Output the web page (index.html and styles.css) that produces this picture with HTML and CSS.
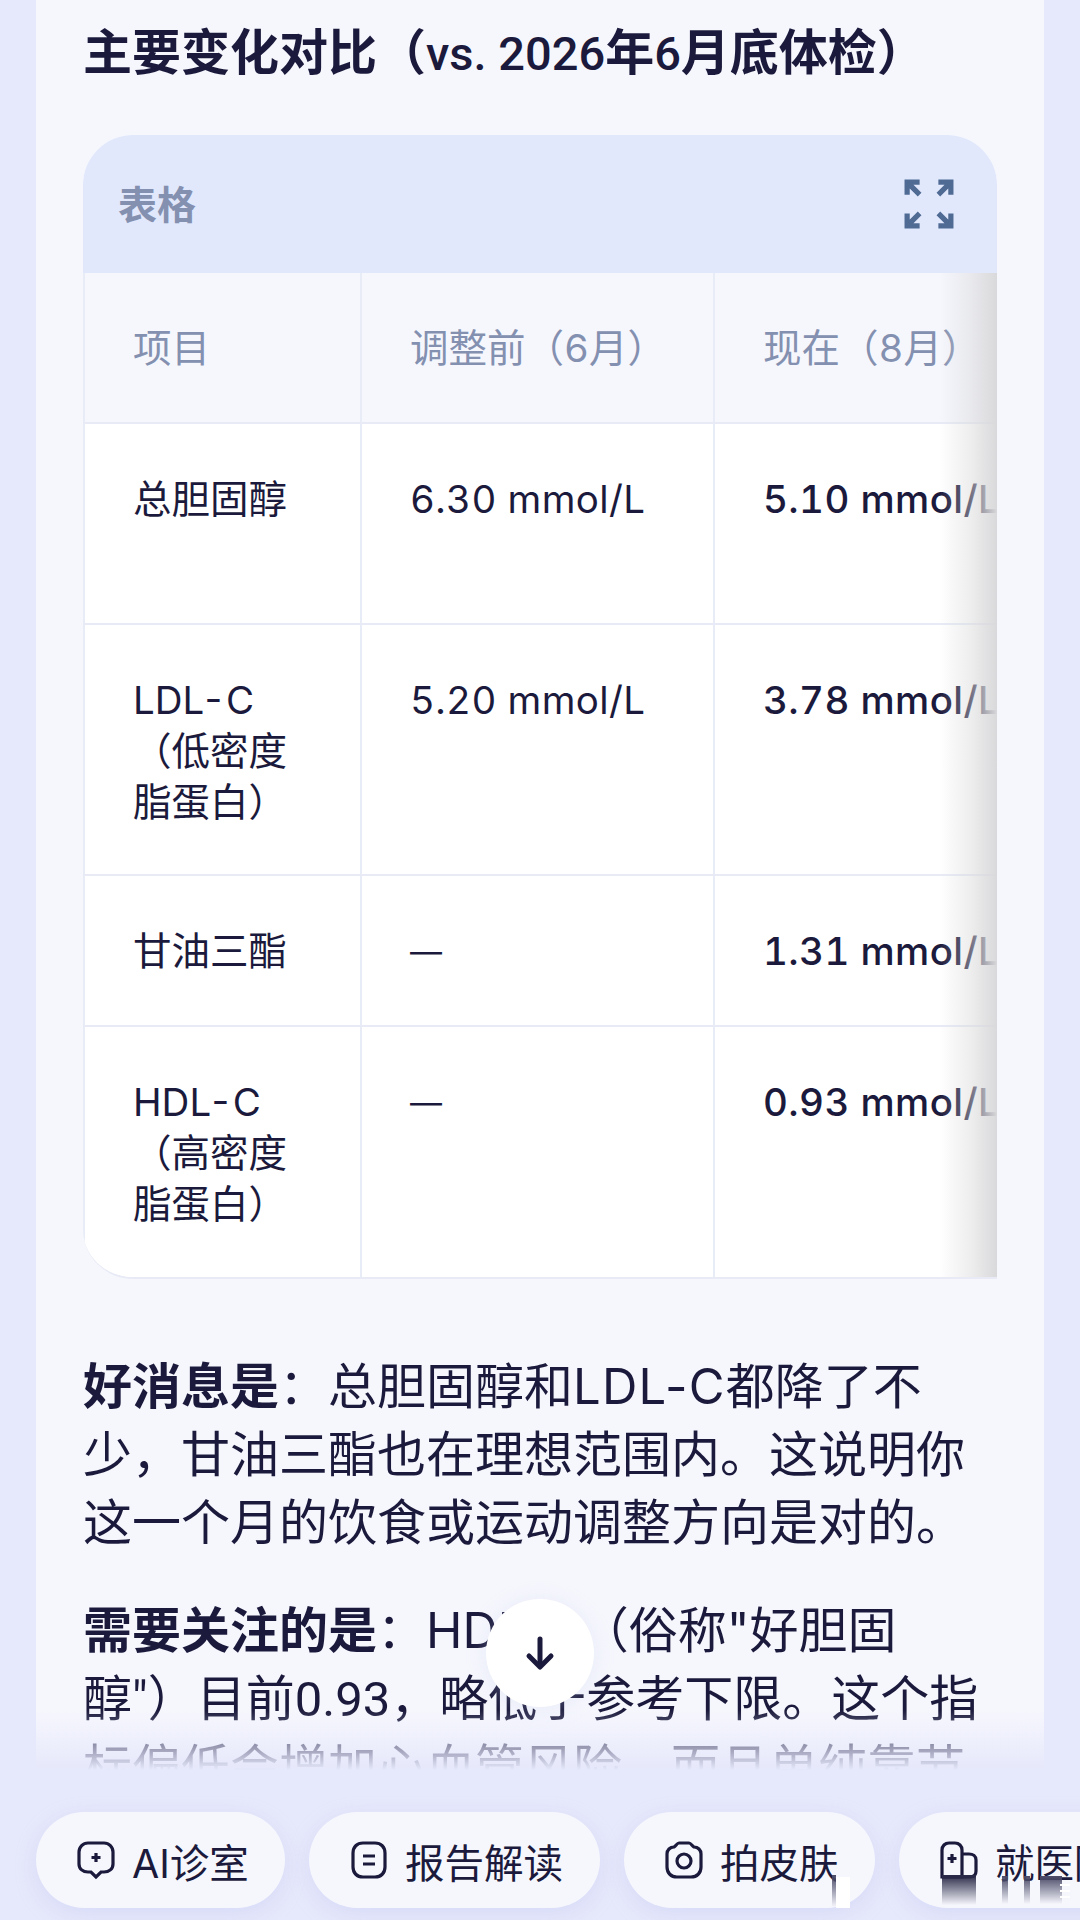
FILE: index.html
```html
<!DOCTYPE html>
<html lang="zh-CN">
<head>
    <meta charset="UTF-8">
    <meta name="viewport" content="width=device-width, initial-scale=1.0">
    <title>主要变化对比</title>
    <link rel="stylesheet" href="styles.css">
</head>
<body>
    <main class="card">
        <h2 class="title">主要变化对比（<span class="title-latin">vs. 2026</span>年<span class="title-latin">6</span>月底体检）</h2>

        <section class="table-box">
            <div class="table-head">
                <span>表格</span>
                <svg class="expand-icon" viewBox="0 0 48 48" fill="none" stroke="#4f6a93" stroke-width="5">
                    <path d="M3 15V3H15M3 3L15 15"/>
                    <path d="M45 15V3H33M45 3L33 15"/>
                    <path d="M3 33V45H15M3 45L15 33"/>
                    <path d="M45 33V45H33M45 45L33 33"/>
                </svg>
            </div>
            <div class="table-scroll">
                <table>
                    <thead>
                        <tr>
                            <th>项目</th>
                            <th>调整前（6月）</th>
                            <th>现在（8月）</th>
                        </tr>
                    </thead>
                    <tbody>
                        <tr class="row-a">
                            <td>总胆固醇</td>
                            <td>6.30 mmol/L</td>
                            <td><strong>5.10 mmol/L</strong></td>
                        </tr>
                        <tr class="row-b">
                            <td>LDL-C<br>（低密度<br>脂蛋白）</td>
                            <td>5.20 mmol/L</td>
                            <td><strong>3.78 mmol/L</strong></td>
                        </tr>
                        <tr class="row-c">
                            <td>甘油三酯</td>
                            <td><span class="dash">—</span></td>
                            <td><strong>1.31 mmol/L</strong></td>
                        </tr>
                        <tr class="row-b">
                            <td>HDL-C<br>（高密度<br>脂蛋白）</td>
                            <td><span class="dash">—</span></td>
                            <td><strong>0.93 mmol/L</strong></td>
                        </tr>
                    </tbody>
                </table>
                <div class="scroll-shade"></div>
            </div>
        </section>

        <p class="para"><strong>好消息是</strong>：总胆固醇和<span class="term">LDL-C</span>都降了不少，甘油三酯也在理想范围内。这说明你这一个月的饮食或运动调整方向是对的。</p>
        <p class="para"><strong>需要关注的是</strong>：HDL-C（俗称"好胆固<br>醇<span class="num">"</span>）目前<span class="num">0.93</span>，略低于参考下限。这个指<br>标偏低会增加心血管风险，而且单纯靠节</p>
    </main>

    <button class="down-btn">
        <svg viewBox="0 0 32 36" fill="none" stroke="#1b1a3c" stroke-width="5" stroke-linecap="round" stroke-linejoin="round">
            <path d="M16 4V31"/>
            <path d="M5 21L16 32L27 21"/>
        </svg>
    </button>

    <div class="dock">
        <div class="fade"></div>
        <nav class="chips">
            <a class="chip chip-ai">
                <svg viewBox="0 0 40 40" fill="none" stroke="#1b1a3c" stroke-width="3.200">
                    <path d="M12 3H28C33 3 37 7 37 12V24C37 29 33 32 28 32H25L20 37L15 32H12C7 32 3 29 3 24V12C3 7 7 3 12 3Z"/>
                    <path d="M20 13V22M15.500 17.500H24.500"/>
                </svg>
                AI诊室
            </a>
            <a class="chip chip-report">
                <svg viewBox="0 0 40 40" fill="none" stroke="#1b1a3c" stroke-width="3.200">
                    <path d="M14 3H26C32 3 36 7 36 13V27C36 33 32 37 26 37H14C8 37 4 33 4 27V13C4 7 8 3 14 3Z"/>
                    <path d="M14 16H26M14 24H26"/>
                </svg>
                报告解读
            </a>
            <a class="chip chip-skin">
                <svg viewBox="0 0 40 40" fill="none" stroke="#1b1a3c" stroke-width="3.200">
                    <path d="M15 3H25C27 3 28 6 30 7C34 7 37 10 37 14V27C37 33 33 37 27 37H13C7 37 3 33 3 27V14C3 10 6 7 10 7C12 6 13 3 15 3Z"/>
                    <circle cx="20" cy="21" r="7"/>
                </svg>
                拍皮肤
            </a>
            <a class="chip chip-doctor">
                <svg viewBox="0 0 40 40" fill="none" stroke="#1b1a3c" stroke-width="3.200">
                    <path d="M3 37V10C3 6 6 3 10 3H16C20 3 23 6 23 10V37Z"/>
                    <path d="M3 37H31C35 37 37 35 37 31V20C37 16 34 14 30 14H23"/>
                    <path d="M13 14V23M8.500 18.500H17.500"/>
                </svg>
                就医陪诊
            </a>
        </nav>
    </div>

    <div class="watermark">
        <i class="wm wm-streak"></i>
        <i class="wm wm-white"></i>
        <i class="wm wm-dark"></i>
        <i class="wm wm-mid wm-mid-a"></i>
        <i class="wm wm-mid wm-mid-b"></i>
        <i class="wm wm-mid wm-mid-c"></i>
        <i class="wm wm-light"></i>
    </div>
</body>
</html>
```

FILE: styles.css
```css
html, body {
    margin: 0;
    height: 1920px;
    overflow: hidden;
}
body {
    position: relative;
    background-color: #e6e8fb;
    font-family: Inter, "Noto Sans CJK SC", sans-serif;
    color: #1b1a3c;
}
.card {
    margin: 0 36px;
    height: 1770px;
    padding: 21px 48px 0 47px;
    box-sizing: border-box;
    background-color: #f6f7fd;
    overflow: hidden;
}
.title {
    margin: 0 0 49px;
    font-size: 49px;
    line-height: 64px;
    font-weight: 700;
    white-space: nowrap;
}
.title-latin {
    font-family: Roboto, sans-serif;
    font-size: 47px;
    font-weight: 500;
}
.table-box {
    width: 914px;
    border-radius: 50px 50px 0 50px;
    overflow: hidden;
    border-bottom: 2px solid #e8ebf6;
    box-sizing: border-box;
    background-color: #fff;
}
.table-head {
    display: flex;
    align-items: center;
    justify-content: space-between;
    height: 138px;
    padding: 0 43px 0 35px;
    background-color: #e1e8fc;
    color: #8490b0;
    font-size: 39px;
    font-weight: 700;
}
.table-head span {
    margin-bottom: 4px;
}
.expand-icon {
    width: 50px;
    height: 50px;
}
.table-scroll {
    position: relative;
    overflow: hidden;
}
table {
    width: 1040px;
    table-layout: fixed;
    border-collapse: collapse;
    font-size: 38.5px;
    line-height: 51px;
    font-variant-numeric: tabular-nums;
}
th:nth-child(1) { width: 277px; }
th:nth-child(2) { width: 353px; }
th, td {
    padding: 50px 30px 0 48px;
    text-align: left;
    vertical-align: top;
    border-right: 2px solid #e8ecf7;
    border-bottom: 2px solid #e8ebf6;
    box-sizing: border-box;
}
th:first-child, td:first-child {
    border-left: 2px solid #e8ecf7;
}
td:nth-child(3), th:nth-child(3) {
    white-space: nowrap;
}
td:nth-child(n+2) {
    letter-spacing: 0.4px;
}
thead tr {
    height: 150px;
    background-color: #f6f7fd;
}
th {
    color: #8490b0;
    font-weight: 400;
    white-space: nowrap;
}
tbody tr {
    background-color: #fff;
}
td strong {
    font-weight: 550;
}
.dash {
    font-size: 32px;
    font-weight: 400;
    vertical-align: 2px;
}
.row-a { height: 201px; }
.row-b { height: 251px; }
.row-c { height: 151px; }
tbody tr:last-child td {
    border-bottom: none;
}
.scroll-shade {
    position: absolute;
    top: 0;
    right: 0;
    bottom: 0;
    width: 58px;
    background: linear-gradient(to right, rgba(216, 216, 218, 0), rgba(216, 216, 218, 0.45) 55%, #d9d9db);
}
.para {
    margin: 0 0 40px;
    font-size: 49px;
    line-height: 68px;
}
.table-box + .para {
    margin-top: 74px;
}
.para strong {
    font-weight: 700;
}
.term {
    letter-spacing: 1.2px;
}
.num {
    font-family: Roboto, sans-serif;
}
.down-btn {
    position: absolute;
    left: 486px;
    top: 1599px;
    width: 108px;
    height: 108px;
    padding: 0;
    border: none;
    border-radius: 50%;
    background-color: #fff;
    box-shadow: 0 2px 20px rgba(200, 205, 240, 0.3);
    display: flex;
    align-items: center;
    justify-content: center;
}
.down-btn svg {
    width: 32px;
    height: 36px;
}
.dock {
    position: absolute;
    left: 0;
    right: 0;
    bottom: 0;
    height: 210px;
}
.fade {
    position: absolute;
    left: 0;
    right: 0;
    top: 0;
    height: 60px;
    background: linear-gradient(to bottom, rgba(230, 232, 251, 0), #e6e8fb);
}
.chips {
    position: absolute;
    left: 36px;
    top: 102px;
    display: flex;
    gap: 24px;
    white-space: nowrap;
}
.chip {
    display: flex;
    align-items: center;
    gap: 16px;
    height: 96px;
    padding-left: 40px;
    box-sizing: border-box;
    border-radius: 48px;
    background-color: #f6f7fd;
    box-shadow: 0 6px 20px rgba(190, 195, 240, 0.35);
    font-size: 39.5px;
    flex-shrink: 0;
}
.chip svg {
    width: 40px;
    height: 42px;
}
.chip-ai { width: 249px; }
.chip-report { width: 291px; }
.chip-skin { width: 251px; }
.chip-doctor { width: 300px; }
.watermark {
    position: absolute;
    inset: 0;
    pointer-events: none;
}
.wm {
    position: absolute;
    display: block;
}
.wm-streak {
    left: 832px;
    top: 1875px;
    width: 4px;
    height: 32px;
    background: linear-gradient(to bottom, #4a4a68, rgba(74, 74, 104, 0));
}
.wm-white {
    left: 836px;
    top: 1877px;
    width: 14px;
    height: 31px;
    background-color: #fff;
}
.wm-dark {
    left: 942px;
    top: 1875px;
    width: 34px;
    height: 30px;
    background: linear-gradient(to bottom, #2a2a48, rgba(42, 42, 72, 0));
}
.wm-mid {
    top: 1876px;
    height: 28px;
    background: linear-gradient(to bottom, #4a4a68, rgba(74, 74, 104, 0));
}
.wm-mid-a { left: 1002px; width: 6px; }
.wm-mid-b { left: 1024px; width: 6px; }
.wm-mid-c { left: 1040px; width: 22px; }
.wm-light {
    left: 1060px;
    top: 1884px;
    width: 10px;
    height: 18px;
    background: repeating-linear-gradient(to bottom, #fff 0, #fff 2px, transparent 2px, transparent 6px);
}
```
